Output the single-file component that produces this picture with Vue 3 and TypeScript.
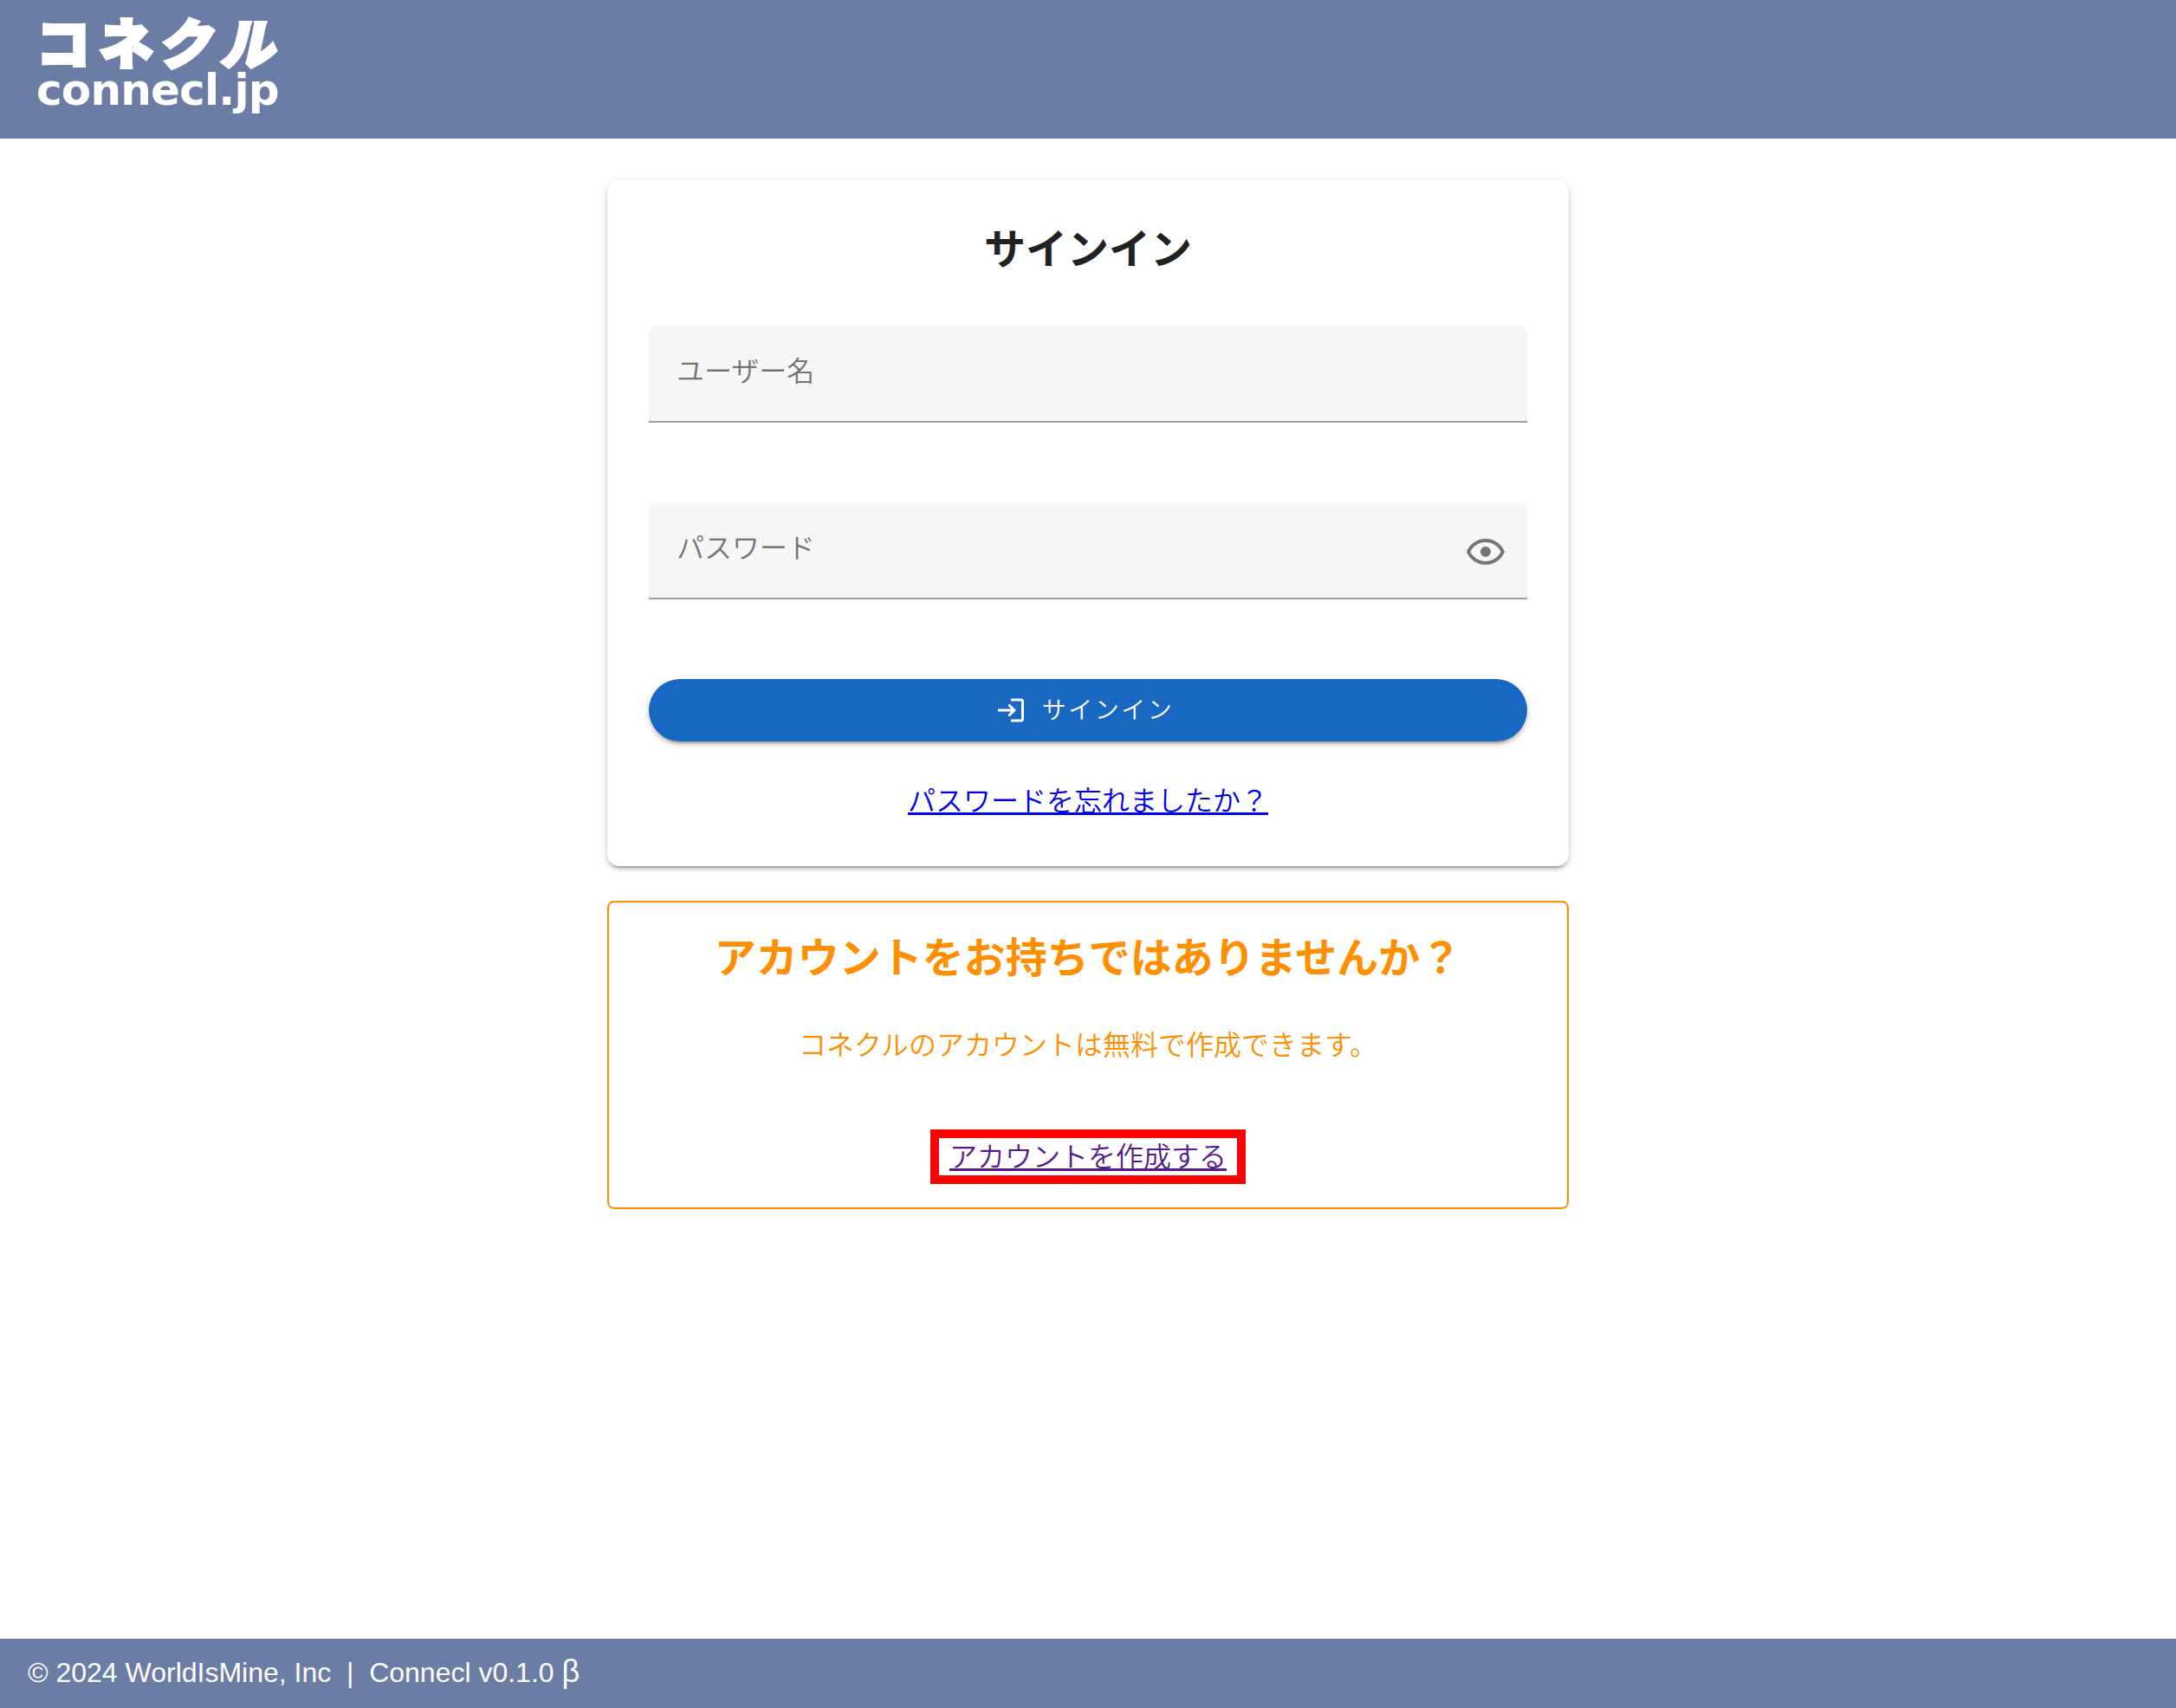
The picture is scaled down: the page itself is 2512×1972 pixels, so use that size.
<script setup lang="ts">
const year: number = 2024
</script>

<template>
  <div class="page">
    <header class="topbar">
      <div class="logo" aria-label="コネクル connecl.jp">
        <div class="logo-kana">
          <span class="kana">コ</span><span class="kana">ネ</span><span class="kana skew">ク</span><span class="kana skew">ル</span>
        </div>
        <div class="logo-latin">connecl.jp</div>
      </div>
    </header>

    <main class="content">
      <section class="card">
        <h1 class="card-title">サインイン</h1>
        <div class="form">
          <label class="field">
            <input class="field-input" type="text" placeholder="ユーザー名" />
          </label>
          <label class="field">
            <input class="field-input" type="password" placeholder="パスワード" />
            <svg class="eye" viewBox="0 0 24 24" aria-hidden="true">
              <path d="M12,9A3,3 0 0,1 15,12A3,3 0 0,1 12,15A3,3 0 0,1 9,12A3,3 0 0,1 12,9M12,4.5C17,4.5 21.27,7.61 23,12C21.27,16.39 17,19.5 12,19.5C7,19.5 2.73,16.39 1,12C2.73,7.61 7,4.5 12,4.5M3.18,12C4.83,15.36 8.24,17.5 12,17.5C15.76,17.5 19.17,15.36 20.82,12C19.17,8.64 15.76,6.5 12,6.5C8.24,6.5 4.83,8.64 3.18,12Z" />
            </svg>
          </label>
          <button class="submit" type="button">
            <svg class="login" viewBox="0 0 24 24" aria-hidden="true">
              <path d="M11 7L9.6 8.4L12.2 11H2V13H12.2L9.6 15.6L11 17L16 12L11 7M20 19H12V21H20C21.1 21 22 20.1 22 19V5C22 3.9 21.1 3 20 3H12V5H20V19Z" />
            </svg>
            <span>サインイン</span>
          </button>
        </div>
        <a class="forgot" href="#">パスワードを忘れましたか？</a>
      </section>

      <section class="signup">
        <h2 class="signup-title">アカウントをお持ちではありませんか？</h2>
        <p class="signup-text">コネクルのアカウントは無料で作成できます。</p>
        <a class="signup-link" href="#">アカウントを作成する</a>
      </section>
    </main>

    <footer class="bottombar">© {{ year }} WorldIsMine, Inc &nbsp;|&nbsp; Connecl v0.1.0 <span class="beta">β</span></footer>
  </div>
</template>

<style scoped>
.page {
  min-height: 1972px;
  display: flex;
  flex-direction: column;
  background: #fff;
  font-family: "Noto Sans CJK JP", "Liberation Sans", sans-serif;
}
.topbar {
  height: 160px;
  flex: none;
  background: #6b7da5;
  padding: 17px 0 0 42px;
  box-sizing: border-box;
}
.logo {
  width: 280px;
  color: #fff;
}
.logo-kana {
  display: flex;
  justify-content: space-between;
  height: 62px;
  font-size: 62px;
  line-height: 60px;
  font-weight: 900;
  -webkit-text-stroke: 4px #fff;
}
.kana {
  display: block;
}
.skew {
  transform: skewX(-12deg);
}
.logo-latin {
  margin-top: 0;
  font-family: "DejaVu Sans", "Liberation Sans", sans-serif;
  font-size: 50px;
  line-height: 50px;
  font-weight: 700;
  letter-spacing: -0.8px;
  white-space: nowrap;
}
.content {
  flex: 1;
  display: flex;
  flex-direction: column;
  align-items: center;
  padding-top: 48px;
}
.card {
  width: 1110px;
  height: 792px;
  box-sizing: border-box;
  padding: 46px 48px 0;
  background: #fff;
  border-radius: 14px;
  box-shadow: 0 6px 2px -4px rgba(0, 0, 0, 0.2), 0 4px 4px 0 rgba(0, 0, 0, 0.14), 0 2px 10px 0 rgba(0, 0, 0, 0.12);
  display: flex;
  flex-direction: column;
  align-items: center;
}
.card-title {
  margin: 0 0 62px;
  font-size: 48px;
  line-height: 60px;
  font-weight: 700;
  color: #212121;
}
.form {
  align-self: stretch;
  display: flex;
  flex-direction: column;
  gap: 92px;
}
.field {
  height: 112px;
  box-sizing: border-box;
  display: flex;
  align-items: center;
  padding: 4px 24px 0 32px;
  background: #f6f6f6;
  border-radius: 8px 8px 0 0;
  border-bottom: 2px solid #9e9e9e;
}
.field-input {
  flex: 1;
  min-width: 0;
  height: 100%;
  box-sizing: border-box;
  padding: 0 0 14px;
  border: 0;
  outline: 0;
  background: transparent;
  font: inherit;
  font-size: 32px;
  font-weight: 350;
  color: #212121;
}
.field-input::placeholder {
  color: #757575;
  opacity: 1;
}
.eye {
  width: 48px;
  height: 48px;
  flex: none;
  fill: #757575;
}
.submit {
  height: 72px;
  display: flex;
  align-items: center;
  justify-content: center;
  gap: 18px;
  padding: 0 8px 0 0;
  border: 0;
  border-radius: 36px;
  background: #1867c0;
  color: #fff;
  font-family: inherit;
  font-size: 28px;
  font-weight: 350;
  letter-spacing: 2.5px;
  box-shadow: 0 6px 2px -4px rgba(0, 0, 0, 0.2), 0 4px 4px 0 rgba(0, 0, 0, 0.14), 0 2px 10px 0 rgba(0, 0, 0, 0.12);
}
.login {
  width: 36px;
  height: 36px;
  fill: #fff;
}
.submit span {
  line-height: 36px;
  position: relative;
  top: -2px;
}
.forgot {
  margin-top: 42px;
  font-size: 32px;
  line-height: 48px;
  font-weight: 350;
  color: #0000ee;
  text-decoration: underline;
}
.signup {
  width: 1110px;
  height: 356px;
  margin-top: 40px;
  box-sizing: border-box;
  padding-top: 26px;
  border: 2px solid #ff8f00;
  border-radius: 8px;
  color: #ff8f00;
  display: flex;
  flex-direction: column;
  align-items: center;
}
.signup-title {
  margin: 0;
  font-size: 48px;
  line-height: 68px;
  font-weight: 700;
}
.signup-text {
  margin: 44px 0 0;
  font-size: 32px;
  line-height: 48px;
  font-weight: 350;
}
.signup-link {
  margin-top: 76px;
  box-sizing: border-box;
  height: 63px;
  padding: 0 12px;
  border: 10px solid #f00;
  font-size: 32px;
  line-height: 39px;
  font-weight: 350;
  color: #551a8b;
  text-decoration: underline;
}
.bottombar {
  height: 80px;
  flex: none;
  box-sizing: border-box;
  padding-left: 32px;
  background: #6b7da5;
  color: #fff;
  font-family: "Liberation Sans", sans-serif;
  font-size: 32px;
  line-height: 75px;
  white-space: nowrap;
}
.beta {
  font-size: 36px;
}
</style>

<style>
html,
body {
  margin: 0;
  background: #fff;
}
</style>
